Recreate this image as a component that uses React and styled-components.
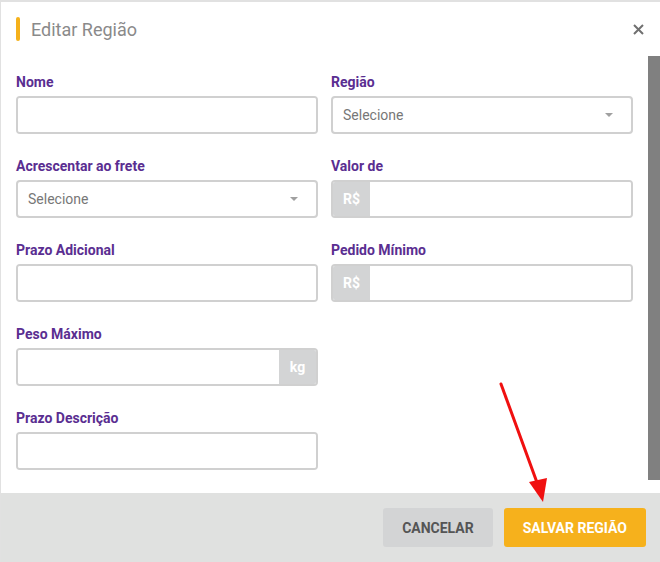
import React from 'react'
import styled, { createGlobalStyle } from 'styled-components'

const GlobalStyle = createGlobalStyle`
  html, body {
    margin: 0;
    padding: 0;
    background: #ffffff;
    font-family: Roboto, 'Liberation Sans', sans-serif;
  }
  * { box-sizing: border-box; }
`

const fields = [
  { label: 'Nome' },
  { label: 'Região', select: true },
  { label: 'Acrescentar ao frete', select: true },
  { label: 'Valor de', prefix: 'R$' },
  { label: 'Prazo Adicional' },
  { label: 'Pedido Mínimo', prefix: 'R$' },
  { label: 'Peso Máximo', suffix: 'kg' },
  { label: 'Prazo Descrição', newRow: true },
]

function Field({ label, select, prefix, suffix, newRow }) {
  return (
    <FieldBox $newRow={newRow}>
      <Label>{label}</Label>
      {select ? (
        <SelectBox>
          <span>Selecione</span>
          <Caret />
        </SelectBox>
      ) : (
        <InputGroup>
          {prefix && <Addon>{prefix}</Addon>}
          <Input type='text' />
          {suffix && <Addon>{suffix}</Addon>}
        </InputGroup>
      )}
    </FieldBox>
  )
}

function App() {
  return (
    <>
      <GlobalStyle />
      <Modal>
        <Header>
          <Title>Editar Região</Title>
          <Close type='button' aria-label='Fechar'>
            <svg width='11' height='11' viewBox='0 0 11 11'>
              <path d='M1 1 L10 10 M10 1 L1 10' stroke='#707070' strokeWidth='2' />
            </svg>
          </Close>
        </Header>
        <Body>
          <Form>
            {fields.map((f) => (
              <Field key={f.label} {...f} />
            ))}
          </Form>
          <Scrollbar>
            <Thumb />
          </Scrollbar>
        </Body>
        <Footer>
          <Button>CANCELAR</Button>
          <Button $primary>SALVAR REGIÃO</Button>
        </Footer>
        <Arrow width='60' height='130' viewBox='0 0 60 130'>
          <line x1='6' y1='4' x2='44' y2='108' stroke='#f01010' strokeWidth='3' strokeLinecap='round' />
          <path d='M34 102 L48 122 L52 98 Z' fill='#f01010' />
        </Arrow>
      </Modal>
    </>
  )
}

const Modal = styled.div`
  position: relative;
  width: 660px;
  height: 562px;
  display: flex;
  flex-direction: column;
  border-top: 2px solid #e1e1e1;
  border-left: 1px solid #e1e1e1;
  background: #fff;
  overflow: hidden;
`

const Header = styled.div`
  height: 54px;
  display: flex;
  align-items: center;
  justify-content: space-between;
  padding: 0 16px 0 15px;
`

const Title = styled.h2`
  margin: 0;
  display: flex;
  align-items: center;
  gap: 11px;
  font-size: 18px;
  font-weight: 400;
  color: #8a8a8a;

  &::before {
    content: '';
    width: 4px;
    height: 24px;
    border-radius: 2px;
    background: #f5b11b;
  }
`

const Close = styled.button`
  border: none;
  background: none;
  padding: 0;
  display: flex;
  cursor: pointer;
`

const Body = styled.div`
  flex: 1;
  display: flex;
`

const Form = styled.div`
  flex: 1;
  display: grid;
  grid-template-columns: 302px 302px;
  column-gap: 13px;
  row-gap: 24px;
  align-content: start;
  padding: 18px 0 0 15px;
`

const FieldBox = styled.div`
  display: flex;
  flex-direction: column;
  gap: 6px;
  grid-column: ${(p) => (p.$newRow ? '1' : 'auto')};
`

const Label = styled.label`
  font-size: 14px;
  line-height: 16px;
  font-weight: 700;
  color: #5a2e91;
`

const InputGroup = styled.div`
  height: 38px;
  display: flex;
  border: 2px solid #d0d0d0;
  border-radius: 4px;
  overflow: hidden;
`

const Input = styled.input`
  flex: 1;
  min-width: 0;
  border: none;
  outline: none;
  padding: 0 10px;
  font-size: 14px;
`

const Addon = styled.span`
  width: 37px;
  display: flex;
  align-items: center;
  justify-content: center;
  background: #d3d4d5;
  color: #fff;
  font-size: 14px;
  font-weight: 700;
`

const SelectBox = styled.div`
  height: 38px;
  display: flex;
  align-items: center;
  justify-content: space-between;
  padding: 0 18px 0 10px;
  border: 2px solid #d0d0d0;
  border-radius: 4px;
  font-size: 14px;
  color: #777;
`

const Caret = styled.span`
  width: 0;
  height: 0;
  border-left: 4px solid transparent;
  border-right: 4px solid transparent;
  border-top: 4px solid #a0a0a0;
`

const Scrollbar = styled.div`
  width: 12px;
  padding-bottom: 13px;
  display: flex;
`

const Thumb = styled.div`
  flex: 1;
  background: #808080;
`

const Footer = styled.div`
  height: 69px;
  display: flex;
  justify-content: flex-end;
  align-items: flex-start;
  gap: 11px;
  padding: 15px 14px 0 0;
  background: #e0e1e0;
`

const Button = styled.button`
  height: 39px;
  padding: 0 19px;
  border: none;
  border-radius: 3px;
  font-family: Roboto, 'Liberation Sans', sans-serif;
  font-size: 14px;
  font-weight: 700;
  background: ${(p) => (p.$primary ? '#f6b11c' : '#d3d4d5')};
  color: ${(p) => (p.$primary ? '#fff' : '#555')};
  cursor: pointer;
`

const Arrow = styled.svg`
  position: absolute;
  left: 494px;
  top: 378px;
  pointer-events: none;
`

export default App
